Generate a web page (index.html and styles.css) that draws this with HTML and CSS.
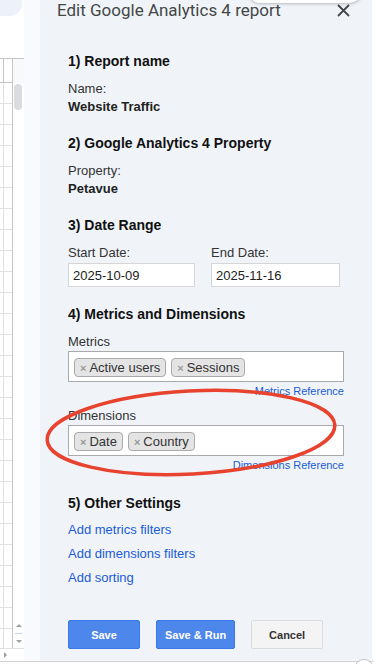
FILE: index.html
```html
<!DOCTYPE html>
<html lang="en">
<head>
    <meta charset="UTF-8">
    <meta name="viewport" content="width=device-width, initial-scale=1.0">
    <title>Edit Google Analytics 4 report</title>
    <link rel="stylesheet" href="styles.css">
</head>
<body>
    <div class="screen">
        <!-- sliver of the spreadsheet behind the sidebar -->
        <div class="sheet">
            <div class="sheet-top"></div>
            <div class="sheet-bar"></div>
            <div class="grid">
                <div class="cells">
                    <div class="col-head"></div>
                    <div class="rows"></div>
                </div>
                <div class="vscroll">
                    <div class="vscroll-head"></div>
                    <div class="thumb"></div>
                    <div class="arrows">
                        <span class="arrow-up"></span>
                        <span class="arrow-sep"></span>
                        <span class="arrow-down"></span>
                    </div>
                </div>
            </div>
            <div class="hscroll"><span class="arrow-right"></span></div>
        </div>
        <div class="gutter"></div>

        <aside class="panel">
            <div class="tab-pill"></div>
            <header class="panel-head">
                <h1>Edit Google Analytics 4 report</h1>
                <button class="close" aria-label="Close">
                    <svg width="13" height="13" viewBox="0 0 13 13">
                        <path d="M1 1L12 12M12 1L1 12" stroke="#444746" stroke-width="1.8" fill="none"/>
                    </svg>
                </button>
            </header>

            <div class="content">
                <section class="step">
                    <h2>1) Report name</h2>
                    <div class="field-label">Name:</div>
                    <div class="field-value">Website Traffic</div>
                </section>

                <section class="step">
                    <h2>2) Google Analytics 4 Property</h2>
                    <div class="field-label">Property:</div>
                    <div class="field-value">Petavue</div>
                </section>

                <section class="step">
                    <h2>3) Date Range</h2>
                    <div class="dates">
                        <div>
                            <label class="field-label" for="startDate">Start Date:</label>
                            <input type="text" id="startDate" value="2025-10-09">
                        </div>
                        <div>
                            <label class="field-label" for="endDate">End Date:</label>
                            <input type="text" id="endDate" value="2025-11-16">
                        </div>
                    </div>
                </section>

                <section class="step">
                    <h2>4) Metrics and Dimensions</h2>
                    <div class="field-label">Metrics</div>
                    <div class="tags">
                        <span class="chip"><span class="chip-x">×</span>Active users</span>
                        <span class="chip"><span class="chip-x">×</span>Sessions</span>
                    </div>
                    <div class="ref"><a href="#">Metrics Reference</a></div>

                    <div class="field-label">Dimensions</div>
                    <div class="tags">
                        <span class="chip"><span class="chip-x">×</span>Date</span>
                        <span class="chip"><span class="chip-x">×</span>Country</span>
                    </div>
                    <div class="ref"><a href="#">Dimensions Reference</a></div>
                </section>

                <section class="step other">
                    <h2>5) Other Settings</h2>
                    <a class="setting-link" href="#">Add metrics filters</a>
                    <a class="setting-link" href="#">Add dimensions filters</a>
                    <a class="setting-link" href="#">Add sorting</a>
                </section>

                <div class="actions">
                    <button class="btn btn-blue">Save</button>
                    <button class="btn btn-blue">Save &amp; Run</button>
                    <button class="btn btn-grey">Cancel</button>
                </div>
            </div>

            <!-- hand-drawn annotation around the dimensions box -->
            <svg class="highlight" width="300" height="100" viewBox="0 0 300 100">
                <ellipse cx="149" cy="49.5" rx="144" ry="41.5" transform="rotate(-3 149 49.5)"
                         fill="none" stroke="#e8432e" stroke-width="3.5"/>
            </svg>
        </aside>
        <div class="edge"></div>
    </div>
    <div class="fab-peek"></div>
</body>
</html>
```

FILE: styles.css
```css
:root {
    --panel: #f0f4f9;
    --title: #444746;
    --text: #222;
    --link: #1a5bd6;
    --grid: #e1e1e1;
    --grid-dark: #c4c7c5;
}

body {
    margin: 0;
    height: 664px;
    overflow: hidden;
    font-family: "Liberation Sans", Arial, sans-serif;
    font-size: 13px;
    color: var(--text);
    background: #fff;
}

.screen {
    display: flex;
    height: 661px;
    border-bottom: 1px solid #d3d3d3;
}

/* spreadsheet strip */
.sheet {
    width: 24px;
    display: flex;
    flex-direction: column;
    background: #fff;
}

.sheet-top {
    width: 22px;
    height: 16px;
    background: #edf2fa;
    border-radius: 0 0 12px 0;
}

.sheet-bar {
    height: 42px;
}

.grid {
    flex: 1;
    display: flex;
    border-top: 1px solid var(--grid-dark);
}

.cells {
    width: 12px;
    display: flex;
    flex-direction: column;
    border-right: 1px solid var(--grid-dark);
}

.col-head {
    height: 23px;
    border-bottom: 1px solid var(--grid-dark);
    background: linear-gradient(to right, transparent 3px, var(--grid-dark) 3px 4px, transparent 4px);
}

.rows {
    flex: 1;
    background:
        linear-gradient(to right, transparent 3px, var(--grid) 3px 4px, transparent 4px),
        repeating-linear-gradient(to bottom, transparent 0 20px, var(--grid) 20px 21px);
}

.vscroll {
    flex: 1;
    display: flex;
    flex-direction: column;
}

.vscroll-head {
    height: 24px;
    background: #f8f9fa;
}

.thumb {
    width: 8px;
    height: 26px;
    margin: 1px 0 0 1px;
    border-radius: 4px;
    background: #dadce0;
}

.arrows {
    margin-top: auto;
    display: flex;
    flex-direction: column;
    align-items: center;
    gap: 6px;
    padding-bottom: 5px;
}

.arrow-up {
    border-left: 3px solid transparent;
    border-right: 3px solid transparent;
    border-bottom: 3px solid #9aa0a6;
}

.arrow-sep {
    width: 7px;
    height: 1px;
    background: #c6d4f5;
}

.arrow-down {
    border-left: 3px solid transparent;
    border-right: 3px solid transparent;
    border-top: 3px solid #9aa0a6;
}

.hscroll {
    height: 12px;
    border-top: 1px solid var(--grid);
    display: flex;
    align-items: center;
    padding-left: 4px;
}

.arrow-right {
    border-top: 3px solid transparent;
    border-bottom: 3px solid transparent;
    border-left: 3px solid #9aa0a6;
}

.gutter {
    width: 16px;
    background: #f8fafd;
}

.edge {
    width: 2px;
    background: #fff;
}

/* sidebar */
.panel {
    width: 332px;
    position: relative;
    background: var(--panel);
}

.tab-pill {
    position: absolute;
    left: 207px;
    top: -30px;
    width: 116px;
    height: 33px;
    background: #fff;
    border-radius: 0 0 14px 14px;
    box-shadow: 0 1px 3px rgba(0, 0, 0, 0.25);
}

.panel-head {
    display: flex;
    align-items: center;
    justify-content: space-between;
    height: 20px;
    padding: 0 22px 0 17px;
}

h1 {
    margin: 0;
    font-family: Roboto, "Open Sans", sans-serif;
    font-size: 17px;
    font-weight: 400;
    line-height: 20px;
    color: var(--title);
}

.close {
    display: flex;
    padding: 0;
    border: none;
    background: none;
}

.content {
    padding: 32px 28px 0;
}

.step + .step {
    margin-top: 18px;
}

.step.other {
    margin-top: 22px;
}

h2 {
    margin: 0 0 10px;
    font-size: 14px;
    font-weight: 700;
    line-height: 18px;
    color: #111;
}

.field-label {
    display: block;
    line-height: 18px;
    color: #333;
}

.field-value {
    line-height: 18px;
    font-weight: 700;
}

.dates {
    display: grid;
    grid-template-columns: 127px 129px;
    column-gap: 16px;
}

.dates .field-label {
    margin-bottom: 1px;
}

input {
    width: 100%;
    height: 24px;
    box-sizing: border-box;
    padding: 0 4px;
    border: 1px solid #d6d6d6;
    background: #fff;
    font-family: inherit;
    font-size: 13px;
    color: var(--text);
}

.tags {
    display: flex;
    align-items: flex-start;
    gap: 5px;
    height: 31px;
    box-sizing: border-box;
    padding: 6px 5px 0;
    border: 1px solid #aaa;
    background: #fff;
}

.chip {
    display: flex;
    align-items: center;
    gap: 3px;
    height: 19px;
    box-sizing: border-box;
    padding: 0 5px;
    border: 1px solid #aaa;
    border-radius: 4px;
    background: #e4e4e4;
    color: #333;
}

.chip-x {
    font-size: 11px;
    font-weight: 700;
    color: #999;
}

.ref {
    margin: 2px 0 9px;
    text-align: right;
    font-size: 11px;
    line-height: 14px;
}

a {
    color: var(--link);
    text-decoration: none;
}

.setting-link {
    display: block;
    line-height: 24px;
}

.other h2 {
    margin-bottom: 6px;
}

.actions {
    display: flex;
    gap: 16px;
    margin-top: 30px;
}

.btn {
    min-width: 72px;
    height: 29px;
    padding: 0 8px;
    border-radius: 2px;
    font-family: inherit;
    font-size: 11px;
    font-weight: 700;
}

.btn-blue {
    background: #4d87ec;
    border: 1px solid #3b78e7;
    color: #fff;
}

.btn-grey {
    background: #f4f4f4;
    border: 1px solid #dcdcdc;
    color: #333;
}

.highlight {
    position: absolute;
    left: 2px;
    top: 383px;
    pointer-events: none;
}

.fab-peek {
    position: absolute;
    left: 354px;
    top: 659px;
    width: 18px;
    height: 18px;
    border: 1px solid #c4c4c4;
    border-radius: 50%;
    background: #fff;
}
```
